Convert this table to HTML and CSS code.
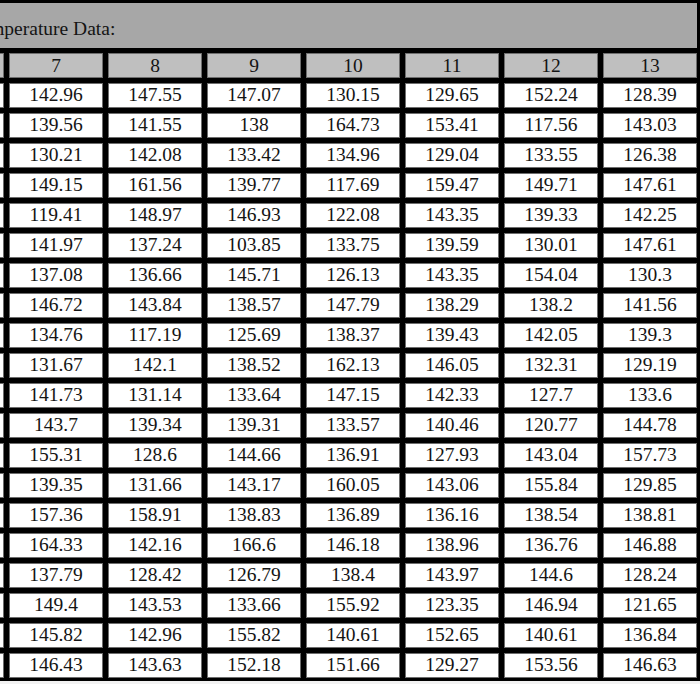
FILE: index.html
```html
<!DOCTYPE html>
<html>
<head>
<meta charset="utf-8">
<link rel="stylesheet" href="styles.css">
</head>
<body>
<div class="sheet" id="sheet">
  <div class="title">Temperature Data:</div>
  <div class="hd"></div><div class="hd">7</div><div class="hd">8</div><div class="hd">9</div><div class="hd">10</div><div class="hd">11</div><div class="hd">12</div><div class="hd">13</div>
</div>
<script src="script.js"></script>
</body>
</html>
```
FILE: script.js
```js
var rows = [
[142.96,147.55,147.07,130.15,129.65,152.24,128.39],
[139.56,141.55,138,164.73,153.41,117.56,143.03],
[130.21,142.08,133.42,134.96,129.04,133.55,126.38],
[149.15,161.56,139.77,117.69,159.47,149.71,147.61],
[119.41,148.97,146.93,122.08,143.35,139.33,142.25],
[141.97,137.24,103.85,133.75,139.59,130.01,147.61],
[137.08,136.66,145.71,126.13,143.35,154.04,130.3],
[146.72,143.84,138.57,147.79,138.29,138.2,141.56],
[134.76,117.19,125.69,138.37,139.43,142.05,139.3],
[131.67,142.1,138.52,162.13,146.05,132.31,129.19],
[141.73,131.14,133.64,147.15,142.33,127.7,133.6],
[143.7,139.34,139.31,133.57,140.46,120.77,144.78],
[155.31,128.6,144.66,136.91,127.93,143.04,157.73],
[139.35,131.66,143.17,160.05,143.06,155.84,129.85],
[157.36,158.91,138.83,136.89,136.16,138.54,138.81],
[164.33,142.16,166.6,146.18,138.96,136.76,146.88],
[137.79,128.42,126.79,138.4,143.97,144.6,128.24],
[149.4,143.53,133.66,155.92,123.35,146.94,121.65],
[145.82,142.96,155.82,140.61,152.65,140.61,136.84],
[146.43,143.63,152.18,151.66,129.27,153.56,146.63]
];
var sheet = document.getElementById('sheet');
rows.forEach(function (r) {
  var lead = document.createElement('div');
  lead.className = 'td';
  sheet.appendChild(lead);
  r.forEach(function (v) {
    var c = document.createElement('div');
    c.className = 'td';
    c.textContent = String(v);
    sheet.appendChild(c);
  });
});
```
FILE: styles.css
```css
html, body {
  margin: 0;
  padding: 0;
  background: #f2f2f2;
  overflow: hidden;
}
.sheet {
  display: grid;
  grid-template-columns: 37px repeat(7, 94px);
  grid-template-rows: 45px;
  grid-auto-rows: 25px;
  gap: 5px;
  padding: 3px;
  margin-left: -36px;
  width: max-content;
  background: #000;
  font-family: "Liberation Serif", "Times New Roman", serif;
  color: #141414;
}
.title {
  grid-column: 1 / -1;
  background: #a7a7a7;
  font-size: 19.5px;
  line-height: 45px;
  padding-top: 3px;
  box-sizing: border-box;
  padding-left: 3px;
  white-space: nowrap;
  overflow: hidden;
}
.hd, .td {
  box-sizing: border-box;
  border: 1px solid #6e6e6e;
  text-align: center;
  font-size: 19.5px;
  line-height: 22px;
  white-space: nowrap;
}
.hd {
  background: #bfbfbf;
  padding-top: 1px;
}
.td {
  background: #fff;
  padding-bottom: 1px;
}
```
